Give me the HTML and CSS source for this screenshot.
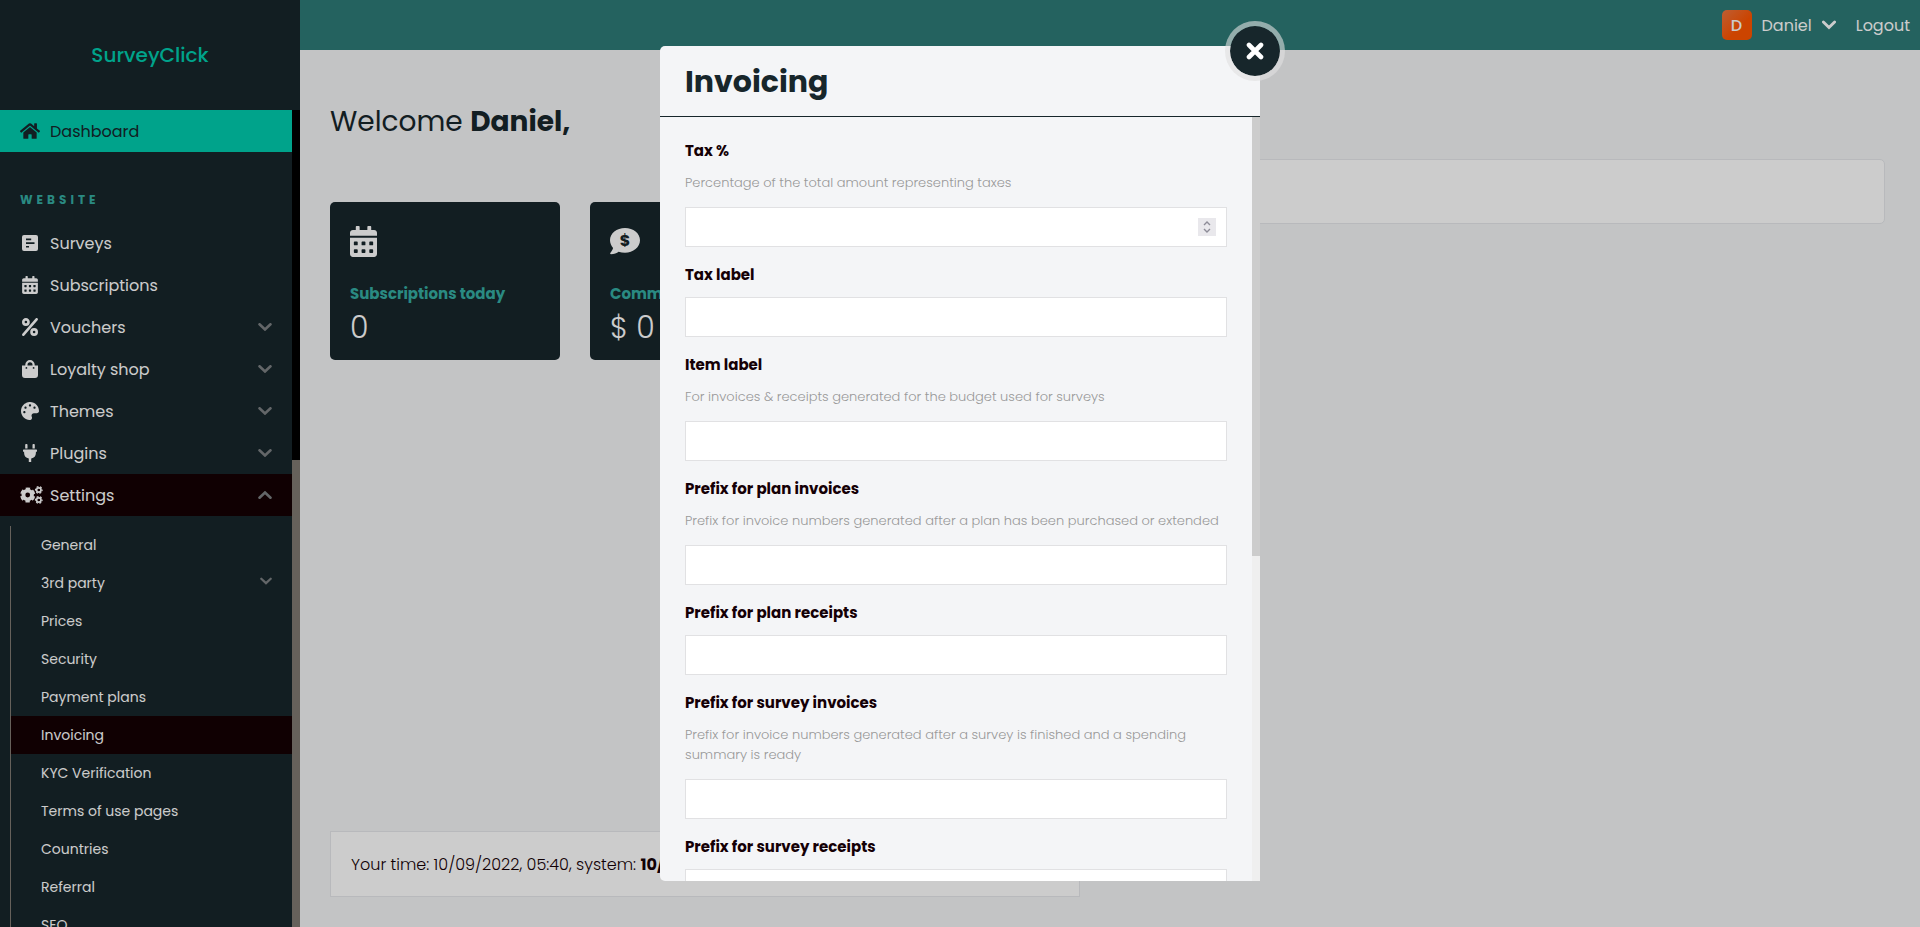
FILE: index.html
```html
<!DOCTYPE html>
<html lang="en">
<head>
<meta charset="utf-8">
<title>SurveyClick - Dashboard</title>
<link rel="stylesheet" href="styles.css">
</head>
<body>
<svg class="sprite" aria-hidden="true">
  <symbol id="calendar" viewBox="0 0 448 512"><path d="M0 464c0 26.500 21.500 48 48 48h352c26.500 0 48-21.500 48-48V192H0v272zm320-196c0-6.600 5.400-12 12-12h40c6.600 0 12 5.400 12 12v40c0 6.600-5.400 12-12 12h-40c-6.600 0-12-5.400-12-12v-40zm0 128c0-6.600 5.400-12 12-12h40c6.600 0 12 5.400 12 12v40c0 6.600-5.400 12-12 12h-40c-6.600 0-12-5.400-12-12v-40zM192 268c0-6.600 5.400-12 12-12h40c6.600 0 12 5.400 12 12v40c0 6.600-5.400 12-12 12h-40c-6.600 0-12-5.400-12-12v-40zm0 128c0-6.600 5.400-12 12-12h40c6.600 0 12 5.400 12 12v40c0 6.600-5.400 12-12 12h-40c-6.600 0-12-5.400-12-12v-40zM64 268c0-6.600 5.400-12 12-12h40c6.600 0 12 5.400 12 12v40c0 6.600-5.400 12-12 12H76c-6.600 0-12-5.400-12-12v-40zm0 128c0-6.600 5.400-12 12-12h40c6.600 0 12 5.400 12 12v40c0 6.600-5.400 12-12 12H76c-6.600 0-12-5.400-12-12v-40zM400 64h-48V16c0-8.800-7.200-16-16-16h-32c-8.800 0-16 7.200-16 16v48H160V16c0-8.800-7.200-16-16-16h-32c-8.800 0-16 7.200-16 16v48H48C21.500 64 0 85.500 0 112v48h448v-48c0-26.500-21.500-48-48-48z"/></symbol>
  <symbol id="down" viewBox="0 0 14 8"><path d="M1.500 1.300 7 6.500l5.500-5.200" fill="none" stroke="currentColor" stroke-width="2.600" stroke-linecap="round"/></symbol>
  <symbol id="up" viewBox="0 0 14 8"><path d="M1.500 6.700 7 1.500l5.500 5.200" fill="none" stroke="currentColor" stroke-width="2.600" stroke-linecap="round"/></symbol>
</svg>

<div class="app">
  <aside class="sidebar">
    <div class="brand"><a href="#">SurveyClick</a></div>
    <div class="sidebar-body">
      <nav class="nav">
        <a class="item current" href="#"><span class="icon"><svg width="20" height="18" viewBox="0 0 576 512"><path d="M280.370 148.260L96 300.110V464a16 16 0 0 0 16 16l112.060-.290a16 16 0 0 0 15.920-16V368a16 16 0 0 1 16-16h64a16 16 0 0 1 16 16v95.640a16 16 0 0 0 16 16.050L464 480a16 16 0 0 0 16-16V300L295.670 148.260a12.190 12.190 0 0 0-15.300 0zM571.600 251.470L488 182.560V44.050a12 12 0 0 0-12-12h-56a12 12 0 0 0-12 12v72.610L318.470 43a48 48 0 0 0-61 0L4.340 251.470a12 12 0 0 0-1.600 16.900l25.500 31A12 12 0 0 0 45.150 301l235.220-193.740a12.190 12.190 0 0 1 15.300 0L530.900 301a12 12 0 0 0 16.900-1.600l25.500-31a12 12 0 0 0-1.700-16.930z"/></svg></span>Dashboard</a>
        <h2 class="section">WEBSITE</h2>
        <a class="item" href="#"><span class="icon"><svg width="16" height="16" viewBox="0 0 16 16"><path fill-rule="evenodd" d="M2 0h12a2 2 0 0 1 2 2v12a2 2 0 0 1-2 2H2a2 2 0 0 1-2-2V2a2 2 0 0 1 2-2zM4 3.500v1.700h5.200V3.500zM4 7.200v1.700h8.500V7.200zM4 10.900v1.700h3V10.900z"/></svg></span>Surveys</a>
        <a class="item" href="#"><span class="icon"><svg width="16" height="18"><use href="#calendar"/></svg></span>Subscriptions</a>
        <a class="item" href="#"><span class="icon"><svg width="16" height="18" viewBox="0 0 16 18"><g fill="none" stroke="currentColor" stroke-width="2.600"><circle cx="3.900" cy="4" r="2.600"/><circle cx="12.100" cy="14" r="2.600"/><path d="M1.400 16.700 14.600 1.300" stroke-linecap="round"/></g></svg></span>Vouchers<svg class="chev" width="14" height="8"><use href="#down"/></svg></a>
        <a class="item" href="#"><span class="icon"><svg width="16" height="18" viewBox="0 0 16 18"><path fill-rule="evenodd" d="M0 5.500h3.300V4.700a4.700 4.700 0 0 1 9.400 0v.8H16V15a3 3 0 0 1-3 3H3a3 3 0 0 1-3-3zM5.500 5.500h5V4.700a2.500 2.500 0 0 0-5 0zM4.400 7a.9.9 0 1 0 0 1.800.9.9 0 0 0 0-1.800zm7.200 0a.9.9 0 1 0 0 1.800.9.9 0 0 0 0-1.800z"/></svg></span>Loyalty shop<svg class="chev" width="14" height="8"><use href="#down"/></svg></a>
        <a class="item" href="#"><span class="icon"><svg width="18" height="18" viewBox="0 0 512 512"><path d="M204.300 5C104.900 24.400 24.800 104.300 5.200 203.400c-37 187 131.700 326.400 258.800 306.700 41.200-6.400 61.400-54.600 42.500-91.700-23.100-45.400 9.900-98.400 60.900-98.400h79.700c35.800 0 64.800-29.600 64.900-65.300C511.500 97.100 368.100-26.900 204.300 5zM96 320c-17.700 0-32-14.300-32-32s14.300-32 32-32 32 14.300 32 32-14.300 32-32 32zm32-128c-17.700 0-32-14.300-32-32s14.300-32 32-32 32 14.300 32 32-14.300 32-32 32zm128-64c-17.700 0-32-14.300-32-32s14.300-32 32-32 32 14.300 32 32-14.300 32-32 32zm128 64c-17.700 0-32-14.300-32-32s14.300-32 32-32 32 14.300 32 32-14.300 32-32 32z"/></svg></span>Themes<svg class="chev" width="14" height="8"><use href="#down"/></svg></a>
        <a class="item" href="#"><span class="icon"><svg width="14" height="18" viewBox="0 0 14 18"><path d="M2.200 1.100a1.100 1.100 0 0 1 2.300 0V4.500H2.200zM9.500 1.100a1.100 1.100 0 0 1 2.300 0V4.500H9.500zM.6 5.600h12.800a.6.6 0 0 1 .6.600v1a.6.6 0 0 1-.6.600h-.5v1.100a5.700 5.700 0 0 1-4.700 5.500V18H5.800v-3.600a5.700 5.700 0 0 1-4.700-5.500V7.800H.6a.6.6 0 0 1-.6-.6v-1a.6.6 0 0 1 .6-.6z"/></svg></span>Plugins<svg class="chev" width="14" height="8"><use href="#down"/></svg></a>
        <a class="item open" href="#"><span class="icon gears"><svg width="23" height="18" viewBox="0 0 23 18"><g fill="none" stroke="currentColor"><circle cx="7.700" cy="9" r="4.300" stroke-width="3.800"/><circle cx="7.700" cy="9" r="6.600" stroke-width="2" stroke-dasharray="4.300 2.610" stroke-dashoffset="-1.300"/><circle cx="18.800" cy="4" r="2.200" stroke-width="1.700"/><circle cx="18.800" cy="4" r="3.300" stroke-width="1.200" stroke-dasharray="2 1.456" stroke-dashoffset="1"/><circle cx="18.800" cy="14" r="2.200" stroke-width="1.700"/><circle cx="18.800" cy="14" r="3.300" stroke-width="1.200" stroke-dasharray="2 1.456" stroke-dashoffset="1"/></g></svg></span>Settings<svg class="chev" width="14" height="8"><use href="#up"/></svg></a>
        <div class="submenu">
          <a class="sub" href="#">General</a>
          <a class="sub" href="#">3rd party<svg class="chev" width="12" height="8"><use href="#down"/></svg></a>
          <a class="sub" href="#">Prices</a>
          <a class="sub" href="#">Security</a>
          <a class="sub" href="#">Payment plans</a>
          <a class="sub active" href="#">Invoicing</a>
          <a class="sub" href="#">KYC Verification</a>
          <a class="sub" href="#">Terms of use pages</a>
          <a class="sub" href="#">Countries</a>
          <a class="sub" href="#">Referral</a>
          <a class="sub" href="#">SEO</a>
        </div>
      </nav>
      <div class="nav-track" aria-hidden="true"><div class="nav-thumb"></div></div>
    </div>
  </aside>

  <div class="page">
    <header class="topbar">
      <a class="user" href="#"><span class="avatar">D</span>Daniel<svg class="user-chev" width="14" height="10" viewBox="0 0 14 10"><path d="M1.400 2 7 7.500 12.600 2" fill="none" stroke="currentColor" stroke-width="2.900" stroke-linecap="round"/></svg></a>
      <a href="#">Logout</a>
    </header>
    <main class="main">
      <div class="left">
        <h1 class="welcome">Welcome <strong>Daniel,</strong></h1>
        <div class="cards">
          <section class="card">
            <svg width="27" height="31"><use href="#calendar"/></svg>
            <h3>Subscriptions today</h3>
            <p>0</p>
          </section>
          <section class="card">
            <svg width="30" height="31" viewBox="0 0 30 31"><path d="M15 2C6.700 2 0 7.400 0 14.300c0 2.900 1.200 5.500 3.100 7.600-.6 2.600-2.600 4.700-2.900 5-.3.500 0 1.300.7 1.300 3.200 0 6-1.300 7.700-2.500 2 .7 4.100 1 6.400 1 8.300 0 15-5.500 15-12.400S23.300 2 15 2z"/><text x="15" y="20" class="coin">$</text></svg>
            <h3>Commissions today</h3>
            <p>$ 0</p>
          </section>
        </div>
        <div class="clock">Your time: 10/09/2022, 05:40, system: <strong>10/09/2022, 05:40</strong></div>
      </div>
      <div class="right"><div class="notice"></div></div>
    </main>
  </div>
</div>

<div class="overlay">
  <div class="modal" role="dialog" aria-labelledby="modal-title">
    <button class="close" type="button" aria-label="Close"><svg width="18" height="18" viewBox="0 0 18 18"><path d="m3 3 12 12M15 3 3 15" stroke="currentColor" stroke-width="4.600" stroke-linecap="round"/></svg></button>
    <h2 class="modal-title" id="modal-title">Invoicing</h2>
    <div class="modal-body">
      <form class="form">
        <div class="field"><label for="tax">Tax %</label><p>Percentage of the total amount representing taxes</p>
          <div class="number"><input id="tax" type="number"><span class="spin" aria-hidden="true"><svg width="8" height="12" viewBox="0 0 8 12"><path d="m1 4 3-3 3 3M1 8l3 3 3-3" fill="none" stroke="currentColor" stroke-width="1.400"/></svg></span></div></div>
        <div class="field"><label for="tax-label">Tax label</label><input id="tax-label" type="text"></div>
        <div class="field"><label for="item-label">Item label</label><p>For invoices &amp; receipts generated for the budget used for surveys</p><input id="item-label" type="text"></div>
        <div class="field"><label for="plan-inv">Prefix for plan invoices</label><p>Prefix for invoice numbers generated after a plan has been purchased or extended</p><input id="plan-inv" type="text"></div>
        <div class="field"><label for="plan-rec">Prefix for plan receipts</label><input id="plan-rec" type="text"></div>
        <div class="field"><label for="sur-inv">Prefix for survey invoices</label><p>Prefix for invoice numbers generated after a survey is finished and a spending summary is ready</p><input id="sur-inv" type="text"></div>
        <div class="field"><label for="sur-rec">Prefix for survey receipts</label><input id="sur-rec" type="text"></div>
      </form>
      <div class="modal-track" aria-hidden="true"><div class="modal-thumb"></div></div>
    </div>
  </div>
</div>
</body>
</html>
```
FILE: styles.css
```css
* { box-sizing: border-box; }
body {
  margin: 0;
  font: 400 16px/25px Poppins, Inter, "Open Sans", sans-serif;
  background: #f4f5f7;
  color: #150006;
  overflow: hidden;
}
h1, h2, h3, p { margin: 0; font-weight: inherit; }
a { color: inherit; text-decoration: none; }
svg { fill: currentColor; display: block; }
.sprite { position: absolute; width: 0; height: 0; }

.app { display: flex; height: 100vh; }

.sidebar {
  flex: 0 0 300px;
  display: flex;
  flex-direction: column;
  background: #17262b;
  color: #fff;
}
.brand {
  flex: 0 0 110px;
  display: flex;
  align-items: center;
  justify-content: center;
  color: #00ccae;
  font-size: 20px;
  line-height: 24px;
  font-weight: 500;
}
.sidebar-body { flex: 1; display: flex; min-height: 0; }
.nav { flex: 1; overflow: hidden; }
.nav-track {
  flex: 0 0 8px;
  display: flex;
  flex-direction: column;
  justify-content: flex-end;
  background: #000;
}
.nav-thumb { height: 57.2%; background: #807a72; }
.item { display: flex; align-items: center; height: 42px; padding: 0 20px; }
.icon { flex: 0 0 30px; display: flex; }
.icon svg { flex: none; margin: 0 2px; }
.icon svg[width="20"], .gears svg { margin: 0; }
.icon svg[width="18"] { margin: 0 1px; }
.icon svg[width="14"] { margin: 0 3px; }
.chev { margin-left: auto; color: #7c8083; }
.current { background: #00ccae; color: #17262b; }
.open, .active { background: #150003; }
.section {
  padding: 36px 20px 10px;
  color: #35ada3;
  font-size: 12px;
  line-height: 24px;
  font-weight: 700;
  letter-spacing: 4px;
}
.submenu { margin: 10px 0 0 10px; border-left: 1px solid #807a72; }
.sub {
  display: flex;
  align-items: center;
  height: 38px;
  padding: 0 20px 0 30px;
  font-size: 14px;
  line-height: 24px;
}
.sub .chev { margin-bottom: 4px; }

.page { flex: 1; display: flex; flex-direction: column; min-width: 0; }
.topbar {
  flex: 0 0 50px;
  display: flex;
  align-items: center;
  justify-content: flex-end;
  gap: 20px;
  padding: 0 10px;
  background: #2d7b77;
  color: #fff;
}
.user { display: flex; align-items: center; gap: 10px; }
.avatar {
  display: grid;
  place-items: center;
  width: 30px;
  height: 30px;
  border-radius: 5px;
  background: linear-gradient(135deg, #ee7640, #ff5500 60%);
  font-weight: 500;
}
.main {
  flex: 1;
  display: grid;
  grid-template-columns: 30fr 31fr;
  gap: 30px;
  padding: 50px 35px 30px 30px;
}
.left { display: flex; flex-direction: column; }
.welcome { color: #17262b; font-size: 28px; line-height: 44px; }
.welcome strong { font-weight: 700; }
.cards {
  display: grid;
  grid-template-columns: repeat(3, 1fr);
  gap: 30px;
  margin-top: 58px;
}
.card { height: 158px; padding: 24px 20px 0; border-radius: 5px; background: #17262b; color: #fff; }
.card h3 { margin-top: 25px; color: #35ada3; font-size: 15px; line-height: 24px; font-weight: 700; white-space: nowrap; }
.card p { margin-top: 1px; font-size: 30px; line-height: 42px; font-weight: 300; }
.coin { fill: #17262b; font-size: 16px; font-weight: 700; text-anchor: middle; }
.clock {
  margin-top: auto;
  padding: 21px 20px 19px;
  border: 1px solid #e6e8eb;
  background: #fff;
  line-height: 24px;
  font-weight: 300;
}
.clock strong { font-weight: 700; }
.notice {
  height: 65px;
  margin-top: 59px;
  border: 1px solid #e6e8eb;
  border-radius: 5px;
  background: #fff;
}

.overlay {
  position: fixed;
  inset: 0;
  display: grid;
  place-items: center;
  background: rgba(0, 0, 0, .2);
}
.modal {
  position: relative;
  display: flex;
  flex-direction: column;
  width: 600px;
  height: 90vh;
  border-radius: 5px 5px 0 5px;
  background: #f4f5f7;
}
.close {
  position: absolute;
  top: -25px;
  right: -25px;
  display: grid;
  place-items: center;
  width: 60px;
  height: 60px;
  padding: 0;
  border: 5px solid rgba(224, 224, 224, .6);
  border-radius: 50%;
  background: #17262b;
  background-clip: padding-box;
  color: #fff;
}
.modal-title {
  flex: none;
  padding: 15px 25px 13px;
  border-bottom: 1px solid #17262b;
  color: #17262b;
  font-size: 30px;
  line-height: 42px;
  font-weight: 700;
}
.modal-body { flex: 1; display: flex; min-height: 0; overflow: hidden; border-bottom-left-radius: 5px; }
.form { flex: 1; padding: 6px 33px 0 25px; margin-right: -8px; overflow: hidden; }
.modal-track { flex: 0 0 8px; background: #efefef; z-index: 1; }
.modal-thumb { height: 57.5%; background: #ccc; }
.field { padding-top: 18px; }
.field label {
  display: block;
  margin-bottom: 12px;
  font-size: 15px;
  line-height: 20px;
  font-weight: 700;
}
.field p {
  margin-bottom: 14px;
  color: #999;
  font-size: 13px;
  line-height: 20px;
  font-weight: 300;
}
.field input {
  display: block;
  width: 100%;
  height: 40px;
  padding: 0 10px;
  border: 1px solid #e1e1e3;
  background: #fff;
  font: inherit;
  appearance: none;
}
.number { position: relative; }
.spin {
  position: absolute;
  top: 11px;
  right: 11px;
  display: grid;
  place-items: center;
  width: 18px;
  height: 18px;
  background: #e9e8ec;
  color: #8d8c97;
}
```
